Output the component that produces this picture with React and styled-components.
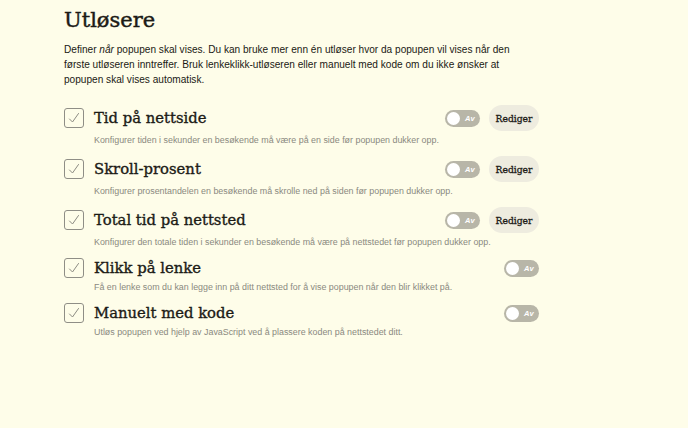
import React from 'react';
import styled, { createGlobalStyle } from 'styled-components';

const GlobalStyle = createGlobalStyle`
  html, body {
    margin: 0;
    padding: 0;
    background: #fefde9;
  }
  body {
    font-family: "Liberation Sans", Arial, sans-serif;
    color: #1c1b16;
  }
`;

const triggers = [
  {
    title: 'Tid på nettside',
    text: 'Konfigurer tiden i sekunder en besøkende må være på en side før popupen dukker opp.',
    edit: true,
  },
  {
    title: 'Skroll-prosent',
    text: 'Konfigurer prosentandelen en besøkende må skrolle ned på siden før popupen dukker opp.',
    edit: true,
  },
  {
    title: 'Total tid på nettsted',
    text: 'Konfigurer den totale tiden i sekunder en besøkende må være på nettstedet før popupen dukker opp.',
    edit: true,
  },
  {
    title: 'Klikk på lenke',
    text: 'Få en lenke som du kan legge inn på ditt nettsted for å vise popupen når den blir klikket på.',
    edit: false,
  },
  {
    title: 'Manuelt med kode',
    text: 'Utløs popupen ved hjelp av JavaScript ved å plassere koden på nettstedet ditt.',
    edit: false,
  },
];

export default function App() {
  return (
    <>
      <GlobalStyle />
      <Page>
        <Heading>Utløsere</Heading>
        <Intro>
          Definer <em>når</em> popupen skal vises. Du kan bruke mer enn én utløser hvor da popupen vil vises når den
          <br />
          første utløseren inntreffer. Bruk lenkeklikk-utløseren eller manuelt med kode om du ikke ønsker at
          <br />
          popupen skal vises automatisk.
        </Intro>
        <List>
          {triggers.map((t) => (
            <Trigger key={t.title}>
              <Header>
                <Checkbox>
                  <svg width="14" height="14" viewBox="0 0 14 14" fill="none">
                    <path d="M2.5 8 L5.5 11 L11.5 2.5" stroke="#8c8b82" strokeWidth="1" strokeLinecap="round" strokeLinejoin="round" />
                  </svg>
                </Checkbox>
                <Title>{t.title}</Title>
                <Actions>
                  <Toggle>
                    <Knob />
                    <span>Av</span>
                  </Toggle>
                  {t.edit && <EditButton>Rediger</EditButton>}
                </Actions>
              </Header>
              <Description>{t.text}</Description>
            </Trigger>
          ))}
        </List>
      </Page>
    </>
  );
}

const Page = styled.main`
  width: 475px;
  padding: 5px 0 0 64px;
`;

const Heading = styled.h1`
  margin: 0;
  font-family: "DejaVu Serif", "Liberation Serif", serif;
  font-weight: 400;
  font-size: 21px;
  line-height: 30px;
  -webkit-text-stroke: 0.45px currentColor;
`;

const Intro = styled.p`
  margin: 7px 0 0;
  font-size: 10.1px;
  line-height: 15px;
  color: #1a1914;

  em {
    font-style: italic;
  }
`;

const List = styled.div`
  margin-top: 18px;
  display: flex;
  flex-direction: column;
  gap: 10px;
`;

const Trigger = styled.div`
  display: flex;
  flex-direction: column;
`;

const Header = styled.div`
  display: flex;
  align-items: center;
  gap: 10px;
  min-height: 20px;
`;

const Checkbox = styled.div`
  width: 18px;
  height: 18px;
  flex: none;
  border: 1px solid #8f8e86;
  border-radius: 3px;
  display: flex;
  align-items: center;
  justify-content: center;
`;

const Title = styled.h2`
  margin: 0;
  font-family: "DejaVu Serif", "Liberation Serif", serif;
  font-weight: 400;
  font-size: 14.8px;
  line-height: 20px;
  -webkit-text-stroke: 0.35px currentColor;
`;

const Actions = styled.div`
  margin-left: auto;
  display: flex;
  align-items: center;
  gap: 9px;
`;

const Toggle = styled.div`
  width: 35px;
  height: 17px;
  box-sizing: border-box;
  border-radius: 9px;
  background: #b8b6a8;
  display: flex;
  align-items: center;
  padding: 0 2px;
  gap: 5px;

  span {
    color: #ffffff;
    font-size: 7.5px;
    font-weight: 700;
    font-style: italic;
  }
`;

const Knob = styled.div`
  width: 13px;
  height: 13px;
  border-radius: 50%;
  background: #ffffff;
`;

const EditButton = styled.button`
  width: 50px;
  height: 26px;
  border: none;
  border-radius: 13px;
  background: #eeecdf;
  font-family: "DejaVu Serif", "Liberation Serif", serif;
  font-weight: 400;
  font-size: 9.2px;
  color: #1c1b16;
  padding: 0;
  -webkit-text-stroke: 0.3px currentColor;
`;

const Description = styled.p`
  margin: 3px 0 0 30px;
  font-size: 8.9px;
  line-height: 12px;
  color: #8a897f;
`;
